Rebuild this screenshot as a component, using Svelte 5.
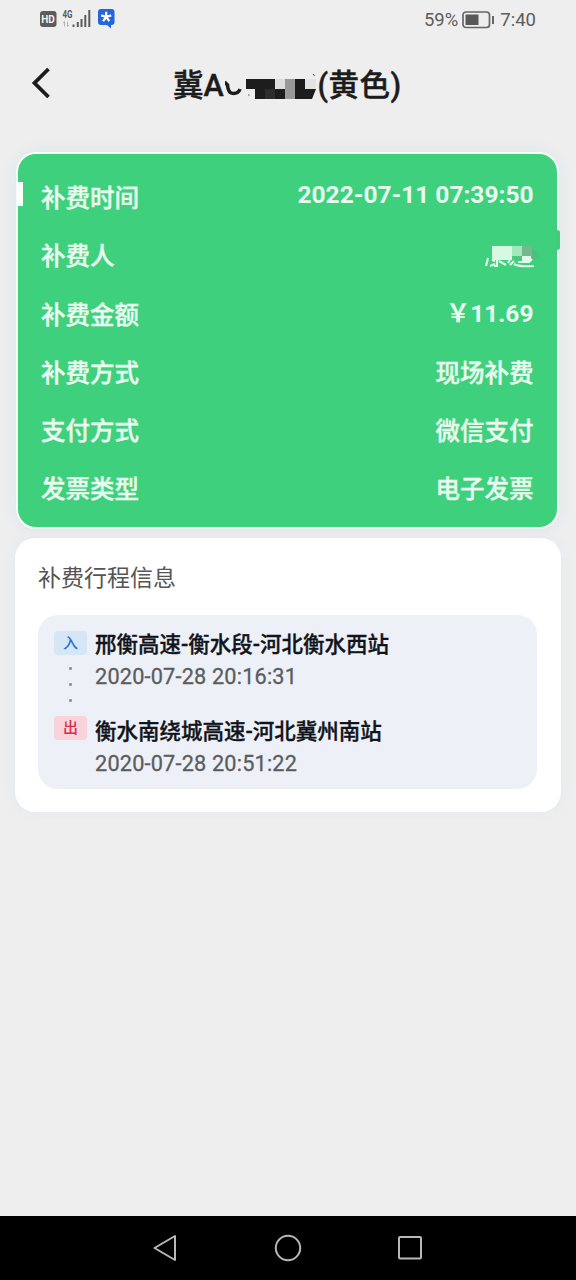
<script>
  const rows = [
    { label: '补费时间', value: '2022-07-11 07:39:50', kind: 'date' },
    { label: '补费人', value: '', kind: 'masked' },
    { label: '补费金额', value: '￥11.69', kind: 'money' },
    { label: '补费方式', value: '现场补费', kind: 'text' },
    { label: '支付方式', value: '微信支付', kind: 'text' },
    { label: '发票类型', value: '电子发票', kind: 'text' }
  ];
  const stops = [
    { tag: '入', cls: 'in', name: '邢衡高速-衡水段-河北衡水西站', time: '2020-07-28 20:16:31' },
    { tag: '出', cls: 'out', name: '衡水南绕城高速-河北冀州南站', time: '2020-07-28 20:51:22' }
  ];
</script>

<div class="screen">
  <div class="status">
    <svg class="signals" width="78" height="24" viewBox="0 0 78 24">
      <rect x="0" y="4" width="16.500" height="16" rx="3" fill="#5c5c5c" />
      <text x="1.200" y="15.800" class="hd">HD</text>
      <text x="22.500" y="11" class="net" textLength="10" lengthAdjust="spacingAndGlyphs">4G</text>
      <path d="M24.500 19.500v-5l-1.500 1.500M27.500 14.500v5l1.500-1.500" fill="none" stroke="#b3b3b3" stroke-width="1" />
      <path d="M33.500 20v-2.500M37.800 20v-5M41.500 20v-8M45.300 20v-12M49.300 20v-17" stroke="#5c5c5c" stroke-width="2" />
      <path d="M61 2h10.500a3 3 0 0 1 3 3v10a3 3 0 0 1-3 3h-.500v3.500l-4-3.500H61a3 3 0 0 1-3-3V5a3 3 0 0 1 3-3z" fill="#2666dd" />
      <path d="M66.200 10V4.800M66.200 10l5-1.600M66.200 10l3.100 4.200M66.200 10l-3.100 4.200M66.200 10l-5-1.600" stroke="#fff" stroke-width="2.200" />
    </svg>
    <div class="power">
      <span class="pct">59%</span>
      <svg width="33" height="20" viewBox="0 0 33 20">
        <rect x="1" y="2" width="26.500" height="15.500" rx="3" fill="none" stroke="#666" stroke-width="1.700" />
        <rect x="3.500" y="4.500" width="13" height="10.500" fill="#595959" />
        <path d="M31 6v8" stroke="#666" stroke-width="2" />
      </svg>
      <span class="clock">7:40</span>
    </div>
  </div>

  <header>
    <svg class="back" width="24" height="34" viewBox="0 0 24 34">
      <path d="M19.500 3L5.500 17 19.500 31" fill="none" stroke="#1c1c1c" stroke-width="3.800" />
    </svg>
    <h1>
      <span class="plate">冀A</span>
      <svg class="mask" width="93" height="36" viewBox="225 66 93 36">
        <path d="M224.500 82l3 3q.500 8.500 6 8.500q5 0 6.500-4.500" fill="none" stroke="#1c1c1c" stroke-width="3.600" />
        <path d="M246 79h29v10h13v10h-33v-10h-9z" fill="#1d1d1d" />
        <rect x="265" y="89" width="10" height="10" fill="#2d2d2d" />
        <rect x="275" y="79" width="10" height="10" fill="#ddd" />
        <rect x="285" y="79" width="11" height="20" fill="#999" />
        <path d="M295 79h10v10h11l-4 10h-17z" fill="#1c1c1c" />
        <rect x="305" y="79" width="11" height="10" fill="#e3e3e3" />
        <path d="M313 74l1.500 2M248 95h1.500" stroke="#555" stroke-width="1" />
      </svg>
      <span class="color">(黄色)</span>
    </h1>
  </header>

  <section class="payment">
    <i class="notch"></i>
    <i class="smudge"></i>
    {#each rows as row}
      <div class="row">
        <span class="label">{row.label}</span>
        {#if row.kind === 'masked'}
          <svg class="name" width="56" height="26" viewBox="485 244 56 26">
            <path d="M488 258l-2 8M492 260l3 1M490 266l5-2M497 259v7l-3 0M499 261l7 4M510 260l-2 3M514 261l-4 4M514 264q4 3 20 2M518 262h11l3-3" fill="none" stroke="#e2fbea" stroke-width="2.200" />
            <rect x="492" y="246" width="20" height="14" fill="#d7f8e3" />
            <rect x="512" y="246" width="10" height="10" fill="#a3e8bd" />
            <rect x="522" y="246" width="10" height="10" fill="#72b98c" />
            <rect x="512" y="256" width="10" height="4" fill="#50c67d" />
            <rect x="522" y="256" width="9" height="5" fill="#e2fbea" />
            <path d="M532 248q6 4 8 10l-8 1z" fill="#50bd78" />
          </svg>
        {:else}
          <span class="value {row.kind}">{row.value}</span>
        {/if}
      </div>
    {/each}
  </section>

  <section class="trip">
    <h2>补费行程信息</h2>
    <div class="route">
      {#each stops as stop, i}
        <div class="stop">
          <div class="rail">
            <span class="tag {stop.cls}">{stop.tag}</span>
            {#if i === 0}
              <div class="dots"><i></i><i></i><i></i></div>
            {/if}
          </div>
          <div class="info">
            <div class="station">{stop.name}</div>
            <div class="time">{stop.time}</div>
          </div>
        </div>
      {/each}
    </div>
  </section>

  <nav>
    <svg width="30" height="30" viewBox="0 0 30 30"><path d="M4.500 15L25 3v24z" /></svg>
    <svg width="30" height="30" viewBox="0 0 30 30"><circle cx="15" cy="15" r="12.200" /></svg>
    <svg width="30" height="30" viewBox="0 0 30 30"><rect x="4" y="4" width="22" height="21.500" rx="1" /></svg>
  </nav>
</div>

<style>
  :global(body) { margin: 0; background: #eee; }
  .screen {
    width: 576px; height: 1280px; box-sizing: border-box; overflow: hidden;
    display: flex; flex-direction: column; background: #eee;
    font-family: Roboto, "Noto Sans CJK SC", sans-serif; color: #1c1c1c;
  }
  .status {
    height: 40px; padding: 0 40px; box-sizing: border-box; display: flex;
    justify-content: space-between; align-items: center; flex: none;
  }
  .signals { margin-bottom: 2px; }
  .hd { font: 700 10px Roboto, sans-serif; fill: #f2f2f2; }
  .net { font: 700 10px Roboto, sans-serif; fill: #5c5c5c; }
  .power { display: flex; align-items: center; font-size: 18.500px; color: #5c5c5c; }
  .power svg { margin: 0 5px 0 4px; }
  header {
    height: 112px; padding-left: 29px; box-sizing: border-box; display: flex; flex: none;
  }
  .back { margin-top: 26px; }
  h1 {
    margin: 26px 0 0 120px; height: 40px; display: flex; align-items: center;
    font-size: 30.500px; line-height: 40px; font-weight: 500; white-space: nowrap;
    -webkit-text-stroke: .4px currentColor;
  }
  .plate { width: 51.500px; }
  .mask { flex: none; margin: -4px 0 0 0; }
  .color { letter-spacing: .5px; }
  .payment {
    position: relative; flex: none; width: 543px; height: 377px; box-sizing: border-box;
    margin-left: 16px; padding: 15px 23.500px 0 23px; border: 2.500px solid #f2fff7; border-radius: 20px;
    background: #3fd07d; box-shadow: 0 0 12px 2px #e1e5ec;
    color: #e8fcef; font-size: 24.500px; font-weight: 500;
  }
  .row { height: 58.300px; display: flex; justify-content: space-between; line-height: 60px; align-items: flex-start; }
  .label, .value { white-space: nowrap; }
  .label, .text { -webkit-text-stroke: .4px currentColor; }
  .date { line-height: 52px; font-weight: 700; }
  .money { line-height: 58px; font-weight: 700; margin-top: -1px; }
  .name { margin: 17px -7px 0 0; }
  .notch { position: absolute; left: -1px; top: 28px; width: 6px; height: 24px; background: #fff; }
  .smudge { position: absolute; right: -2.500px; top: 76px; width: 4px; height: 20px; border-radius: 0 3px 3px 0; background: #3fcb78; }
  .trip {
    flex: none; width: 546px; height: 274px; box-sizing: border-box; margin: 9px 0 0 15px;
    padding: 23px; border-radius: 20px; background: #fff; box-shadow: 0 0 12px 2px #e6e9ee;
  }
  h2 { margin: 0; height: 54px; font-size: 23px; line-height: 36px; font-weight: 400; color: #555; }
  .route {
    height: 174px; width: 499px; box-sizing: border-box; padding: 12px 16px 0;
    border-radius: 20px; background: #edf0f6;
  }
  .stop { display: flex; height: 87px; }
  .rail { width: 33px; margin-right: 8px; display: flex; flex-direction: column; }
  .tag {
    height: 24px; margin-top: 4px; border-radius: 4px; text-align: center;
    font-size: 15px; line-height: 24px; font-weight: 500;
  }
  .in { background: #d5e6f7; color: #2c6fd0; }
  .out { background: #f8d3db; color: #d62f48; margin-top: 2px; }
  .dots { display: flex; flex-direction: column; align-items: center; gap: 13.500px; margin-top: 12px; }
  .dots i { width: 2.500px; height: 2.500px; border-radius: 50%; background: #8d929a; }
  .station {
    font-size: 21.500px; line-height: 36px; height: 34px; font-weight: 500; color: #11141a;
    white-space: nowrap; -webkit-text-stroke: .35px currentColor;
  }
  .time {
    font-size: 21.700px; line-height: 31px; height: 31px; font-weight: 400; color: #5a5c60;
    white-space: nowrap; letter-spacing: .190px; -webkit-text-stroke: .3px currentColor;
  }
  nav {
    height: 64px; margin-top: auto; flex: none; background: #000; display: flex;
    justify-content: space-between; align-items: center; padding: 0 151px 0 150px;
  }
  nav svg { fill: none; stroke: #b8b8b8; stroke-width: 2; stroke-linejoin: round; }
</style>
